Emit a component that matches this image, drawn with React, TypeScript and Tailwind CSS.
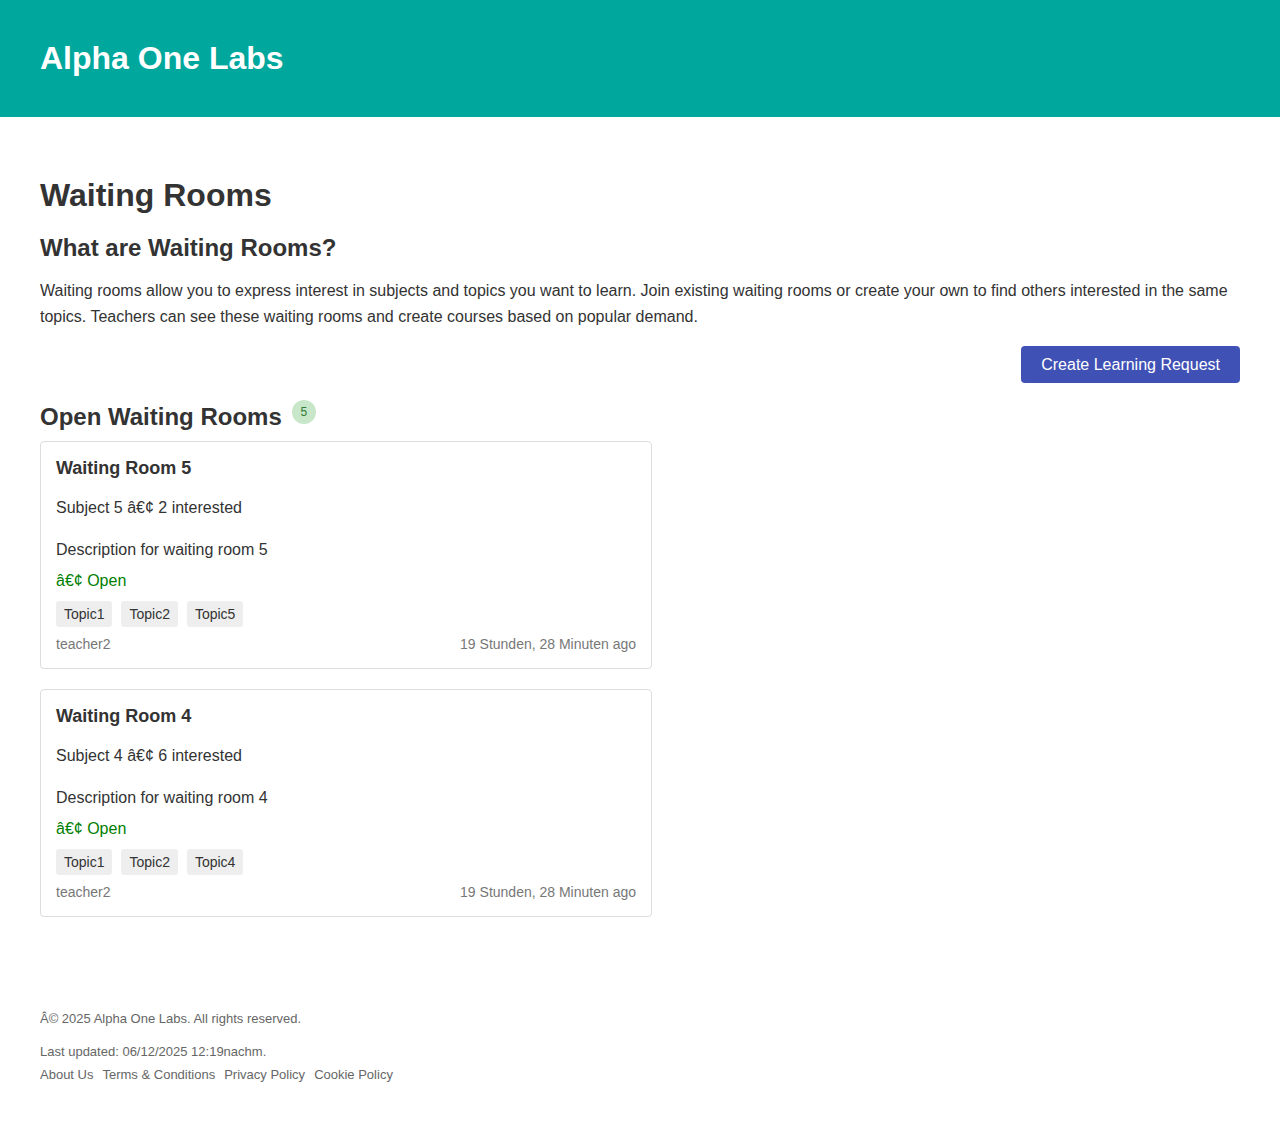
import React from "react";

const font = { fontFamily: '"Liberation Sans", Arial, sans-serif' };

type Room = { title: string; subject: string; interested: number; desc: string; topics: string[] };

const rooms: Room[] = [
  { title: "Waiting Room 5", subject: "Subject 5", interested: 2, desc: "Description for waiting room 5", topics: ["Topic1", "Topic2", "Topic5"] },
  { title: "Waiting Room 4", subject: "Subject 4", interested: 6, desc: "Description for waiting room 4", topics: ["Topic1", "Topic2", "Topic4"] },
];

function Card({ r }: { r: Room }) {
  return (
    <div className="w-[612px] border border-[#dddddd] rounded-[4px] px-[15px] pt-[16px] pb-[16px] bg-white">
      <h3 className="text-[18px] leading-[21px] font-bold text-[#333333]">{r.title}</h3>
      <p className="mt-[20px] text-[16px] leading-[18px] text-[#333333]">
        {r.subject} â€¢ {r.interested} interested
      </p>
      <p className="mt-[24px] text-[16px] leading-[18px] text-[#333333]">{r.desc}</p>
      <p className="mt-[13px] text-[16px] leading-[18px] text-[#008000]">â€¢ Open</p>
      <div className="mt-[11px] flex gap-[9px]">
        {r.topics.map((t) => (
          <span key={t} className="bg-[#eeeeee] rounded-[3px] px-[8px] py-[5px] text-[14px] leading-[16px] text-[#333333]">
            {t}
          </span>
        ))}
      </div>
      <div className="mt-[9px] flex justify-between text-[14px] leading-[16px] text-[#777777]">
        <span>teacher2</span>
        <span>19 Stunden, 28 Minuten ago</span>
      </div>
    </div>
  );
}

export default function App() {
  return (
    <div style={font} className="min-h-[1122px] bg-white text-[#333333]">
      <header className="h-[117px] bg-[#00a79d] px-10 flex items-center">
        <h1 className="text-[32px] leading-[37px] font-bold text-white">Alpha One Labs</h1>
      </header>
      <main className="px-10 pt-[60px]">
        <h1 className="text-[32px] leading-[37px] font-bold text-[#333333]">Waiting Rooms</h1>
        <h2 className="mt-[20px] text-[24px] leading-[28px] font-bold text-[#333333]">What are Waiting Rooms?</h2>
        <p className="mt-[16px] text-[16px] leading-[26px] text-[#333333]">
          Waiting rooms allow you to express interest in subjects and topics you want to learn. Join existing waiting rooms or create your own to find others interested in the same topics. Teachers can see these waiting rooms and create courses based on popular demand.
        </p>
        <div className="mt-[16px] flex justify-end">
          <button className="h-[37px] px-[20px] bg-[#3f51b5] text-white text-[16px] leading-[18px] rounded-[4px]">
            Create Learning Request
          </button>
        </div>
        <div className="mt-[20px] flex items-start">
          <h2 className="text-[24px] leading-[28px] font-bold text-[#333333]">Open Waiting Rooms</h2>
          <span className="ml-[10px] mt-[-3px] w-[24px] h-[24px] rounded-full bg-[#c8e6c9] text-[#2e7d32] text-[12px] flex items-center justify-center">
            5
          </span>
        </div>
        <div className="mt-[10px] flex flex-col gap-[20px]">
          {rooms.map((r) => (
            <Card key={r.title} r={r} />
          ))}
        </div>
      </main>
      <footer className="px-10 pt-[94px] pb-[40px] text-[13px] leading-[15px] text-[#666666]">
        <p>Â© 2025 Alpha One Labs. All rights reserved.</p>
        <p className="mt-[18px]">Last updated: 06/12/2025 12:19nachm.</p>
        <div className="mt-[8px] flex gap-[9px]">
          <a>About Us</a>
          <a>Terms &amp; Conditions</a>
          <a>Privacy Policy</a>
          <a>Cookie Policy</a>
        </div>
      </footer>
    </div>
  );
}
